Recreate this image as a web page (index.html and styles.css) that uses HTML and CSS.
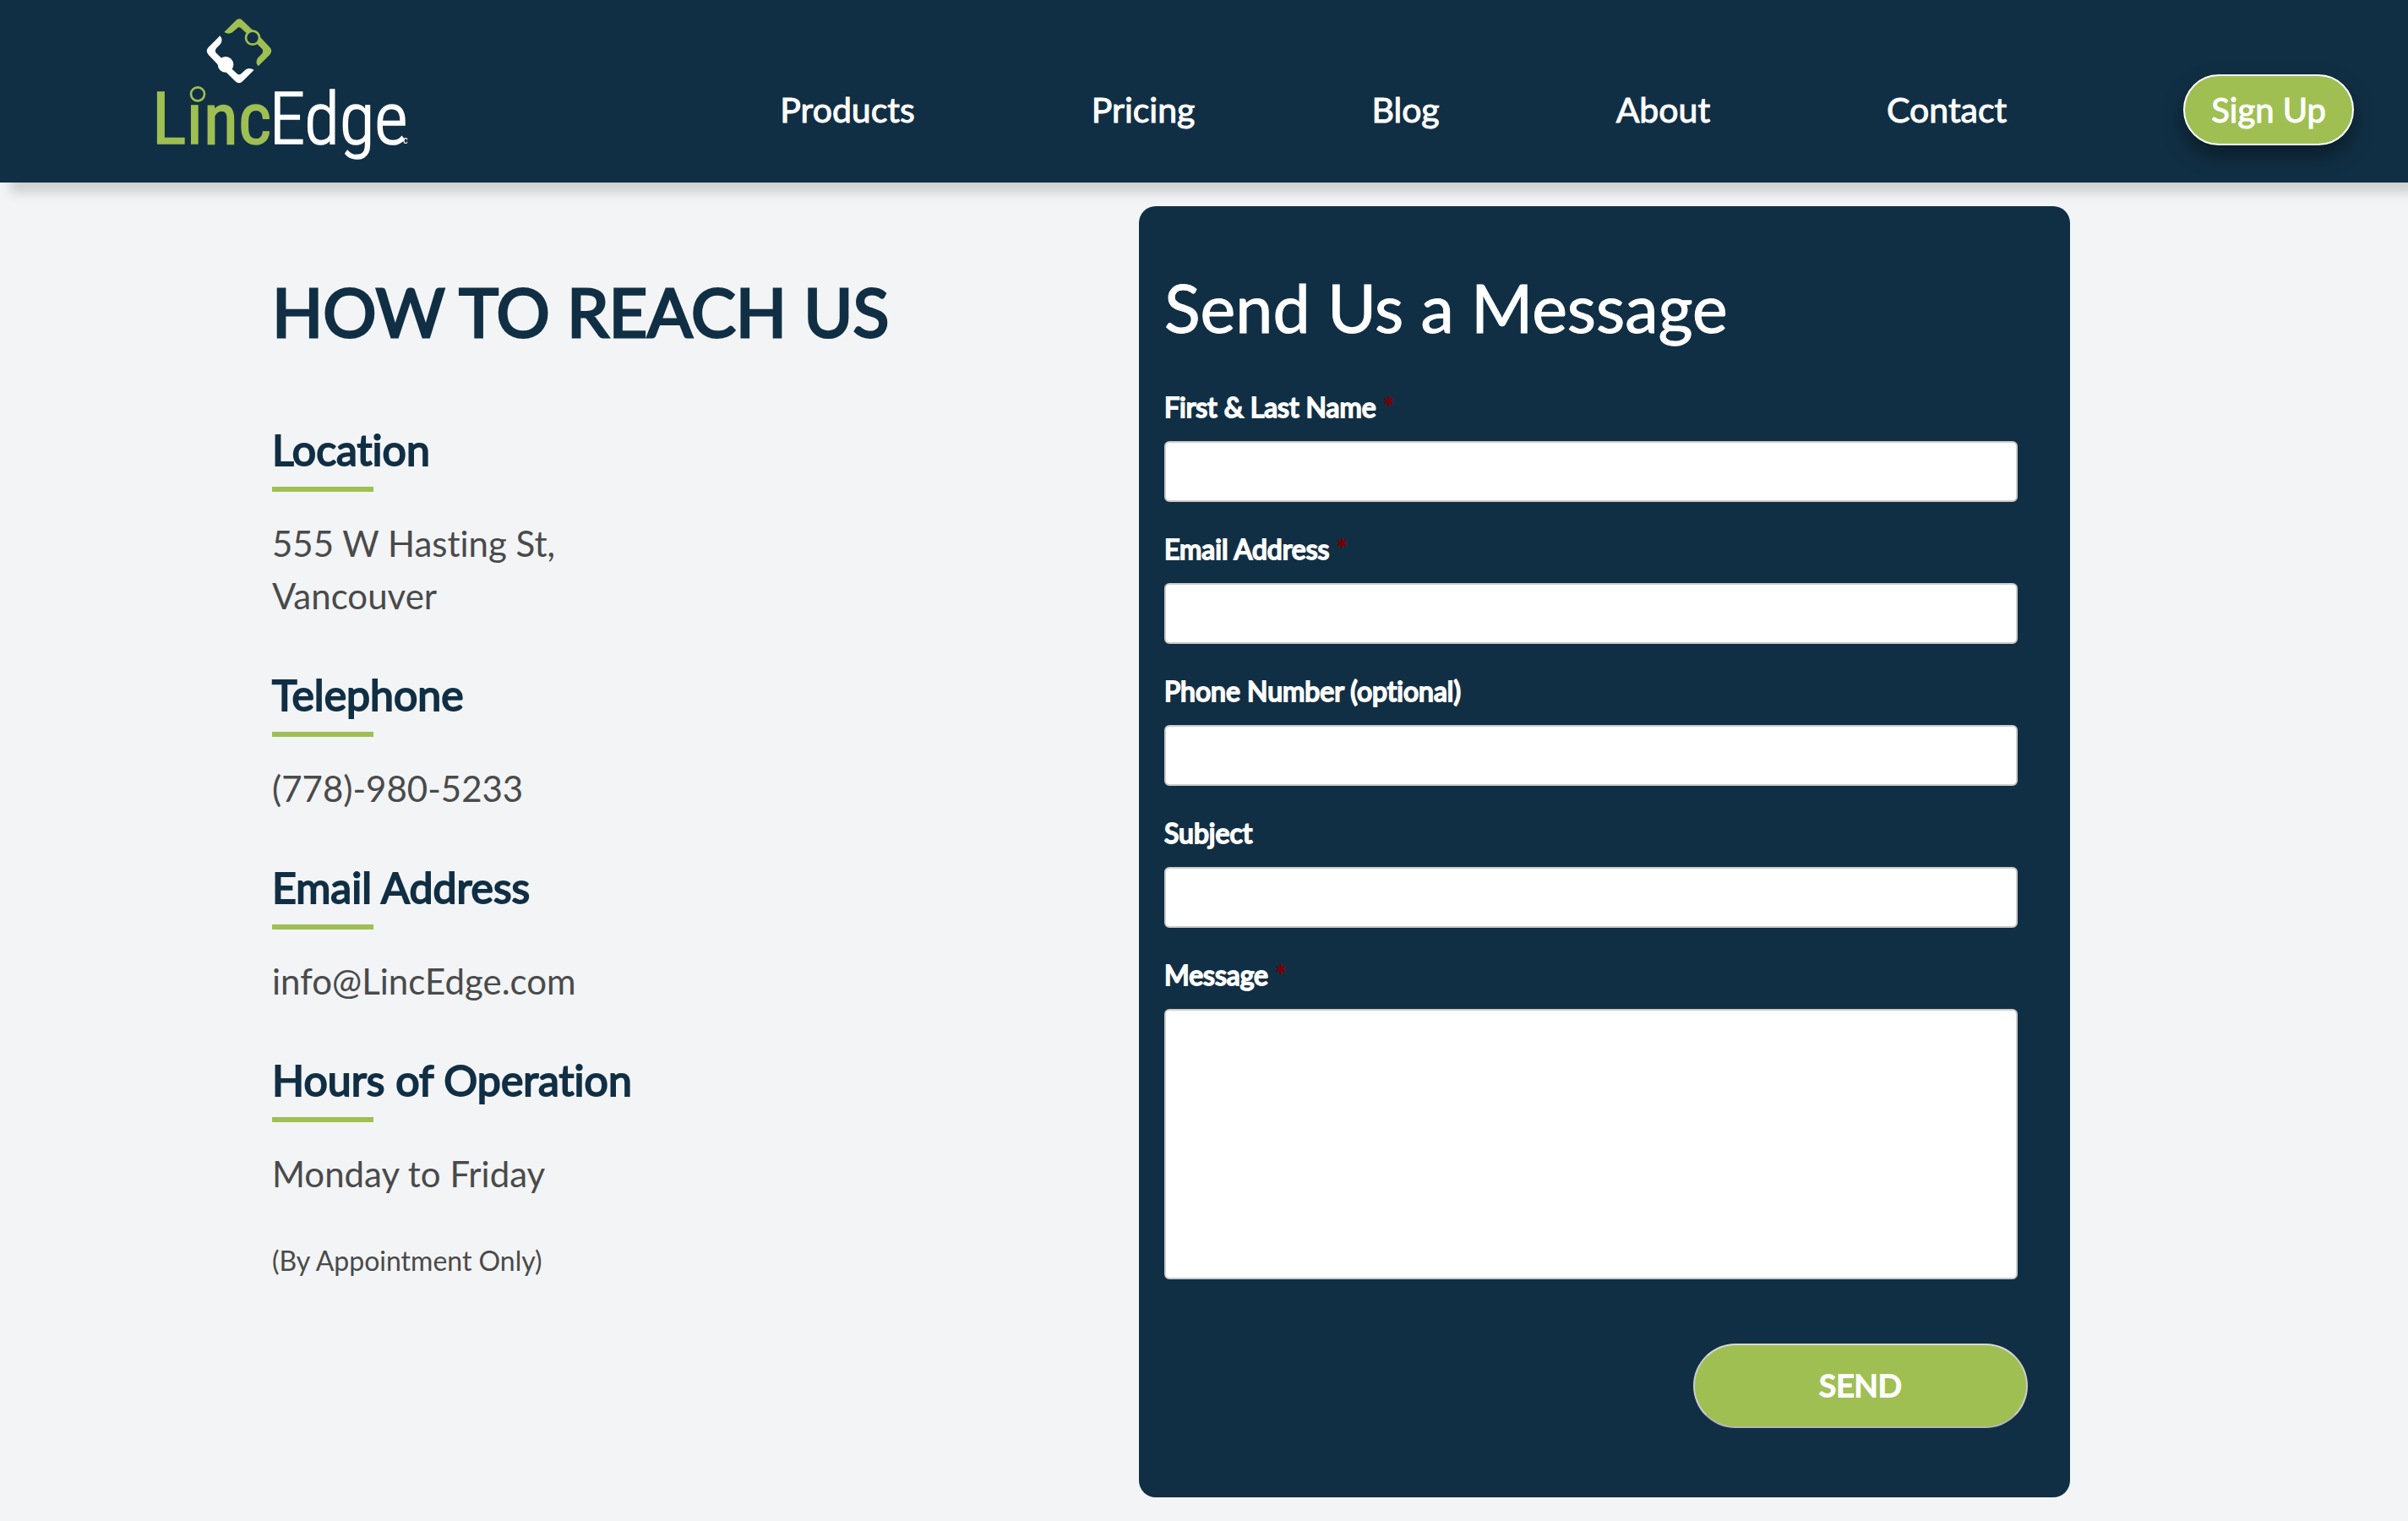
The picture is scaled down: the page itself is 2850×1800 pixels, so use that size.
FILE: index.html
```html
<!DOCTYPE html>
<html lang="en">
<head>
<meta charset="utf-8">
<title>LincEdge – Contact</title>
<link rel="stylesheet" href="styles.css">
</head>
<body>
<header class="header">
  <a class="logo" href="#" aria-label="LincEdge home">
    <svg class="logo-art" viewBox="0 0 1080 648">
      <defs>
        <g id="link-half">
          <path d="M316 114 L356 74 Q369 60 383 74 L422 112 L404 126 L377 101 Q369 93 361 101 L345 115 Q332 124 316 114 Z"/>
          <path d="M442 130 L478 168 Q490 181 478 194 L437 235 Q425 222 435 206 L449 192 Q458 181 449 172 L424 148 Z"/>
        </g>
      </defs>
      <use href="#link-half" class="mark-green"/>
      <use href="#link-half" class="mark-white" transform="rotate(180 369 181)"/>
      <circle class="mark-ring" cx="417" cy="134" r="24"/>
      <circle class="mark-white" cx="321" cy="229" r="28"/>
      <text class="word word-linc" x="60" y="510">Lınc</text>
      <circle class="mark-ring" cx="222" cy="334" r="24"/>
      <text class="word word-edge" x="476" y="510">Edge</text>
      <text class="word word-mark" x="951" y="510">c</text>
    </svg>
  </a>
  <nav class="nav">
    <a class="nav-link" href="#">Products</a>
    <a class="nav-link" href="#">Pricing</a>
    <a class="nav-link" href="#">Blog</a>
    <a class="nav-link" href="#">About</a>
    <a class="nav-link" href="#">Contact</a>
    <a class="signup" href="#">Sign Up</a>
  </nav>
</header>
<main class="page">
  <section class="reach">
    <h1 class="reach-title">HOW TO REACH US</h1>
    <h2 class="reach-heading">Location</h2>
    <p class="reach-text">555 W Hasting St,<br>Vancouver</p>
    <h2 class="reach-heading">Telephone</h2>
    <p class="reach-text">(778)-980-5233</p>
    <h2 class="reach-heading">Email Address</h2>
    <p class="reach-text">info@LincEdge.com</p>
    <h2 class="reach-heading">Hours of Operation</h2>
    <p class="reach-text">Monday to Friday</p>
    <p class="reach-note">(By Appointment Only)</p>
  </section>
  <form class="card">
    <h2 class="card-title">Send Us a Message</h2>
    <label class="label" for="name">First &amp; Last Name <span class="required">*</span></label>
    <input class="field" id="name" type="text">
    <label class="label" for="email">Email Address <span class="required">*</span></label>
    <input class="field" id="email" type="email">
    <label class="label" for="phone">Phone Number (optional)</label>
    <input class="field" id="phone" type="tel">
    <label class="label" for="subject">Subject</label>
    <input class="field" id="subject" type="text">
    <label class="label" for="message">Message <span class="required">*</span></label>
    <textarea class="field message" id="message"></textarea>
    <button class="send" type="submit">SEND</button>
  </form>
</main>
</body>
</html>
```
FILE: styles.css
```css
* {
  box-sizing: border-box;
}

body {
  margin: 0;
  background: #f2f4f6;
  color: #4a4a4a;
  font-family: Lato, "Liberation Sans", sans-serif;
  font-variant-ligatures: none;
}

.header {
  display: flex;
  justify-content: space-between;
  align-items: flex-start;
  height: 216px;
  padding: 0 64px 0 160px;
  background: #112f44;
  box-shadow: 12px 12px 12px #cfd0d0;
}

.logo-art {
  display: block;
  width: 360px;
  height: 216px;
}

.mark-green {
  fill: #9fbf52;
}

.mark-white {
  fill: #fff;
}

.mark-ring {
  fill: #112f44;
  stroke: #9fbf52;
  stroke-width: 8px;
}

.word {
  font-family: "Roboto Condensed", Roboto, sans-serif;
  font-size: 256px;
}

.word-linc {
  fill: #9fbf52;
  stroke: #9fbf52;
  stroke-width: 4px;
}

.word-edge {
  fill: #fff;
  font-weight: 300;
  stroke: #fff;
  stroke-width: 5px;
}

.word-mark {
  fill: #fff;
  font-size: 36px;
}

.nav {
  display: flex;
  align-items: center;
  gap: 209px;
  padding-top: 88px;
}

.nav-link,
.signup {
  color: #fff;
  font-size: 41px;
  line-height: 60px;
  text-decoration: none;
  -webkit-text-stroke: 1px #fff;
}

.signup {
  padding: 10px 31px;
  border: 2px solid #fff;
  border-radius: 42px;
  background: #9fbf52;
  box-shadow: 0 12px 24px rgba(0, 0, 0, 0.4);
  font-size: 40px;
}

.page {
  display: grid;
  grid-template-columns: 27fr 29fr;
  align-items: start;
  padding: 28px 400px 28px 322px;
}

.reach-title {
  margin: 77px 0 83px;
  color: #112f44;
  font-size: 79px;
  font-weight: 400;
  line-height: 96px;
  -webkit-text-stroke: 3px #112f44;
}

.reach-heading {
  margin: 0;
  color: #112f44;
  font-size: 50px;
  font-weight: 400;
  line-height: 64px;
  -webkit-text-stroke: 2px #112f44;
}

.reach-heading::after {
  content: "";
  display: block;
  width: 120px;
  height: 6px;
  margin-top: 12px;
  background: #9fbf52;
}

.reach-text {
  margin: 30px 0 54px;
  font-size: 42px;
  line-height: 62px;
}

.reach-note {
  margin: 0;
  font-size: 32px;
  line-height: 36px;
}

.card {
  display: flex;
  flex-direction: column;
  padding: 72px 62px 82px 30px;
  border-radius: 20px;
  background: #112f44;
  color: #fff;
}

.card-title {
  margin: 0 0 46px;
  font-size: 79px;
  font-weight: 400;
  line-height: 96px;
  -webkit-text-stroke: 1px #fff;
}

.label {
  margin-bottom: 16px;
  font-size: 32px;
  line-height: 48px;
  -webkit-text-stroke: 2px #fff;
}

.required {
  color: #790000;
  -webkit-text-stroke: 1px #790000;
}

.field {
  height: 72px;
  margin-bottom: 32px;
  padding: 0 16px;
  border: 2px solid #ccc;
  border-radius: 6px;
  background: #fff;
  font: inherit;
  font-size: 32px;
}

.message {
  height: 320px;
  resize: none;
}

.send {
  align-self: flex-end;
  width: 396px;
  height: 100px;
  margin: 44px -12px 0 0;
  padding: 0 0 4px;
  border: 2px solid;
  border-color: #d8d8d8 #ccc #b5b5b5;
  border-radius: 50px;
  background: #9fbf52;
  color: #fff;
  font: inherit;
  font-size: 37px;
  -webkit-text-stroke: 2px #fff;
}
```
